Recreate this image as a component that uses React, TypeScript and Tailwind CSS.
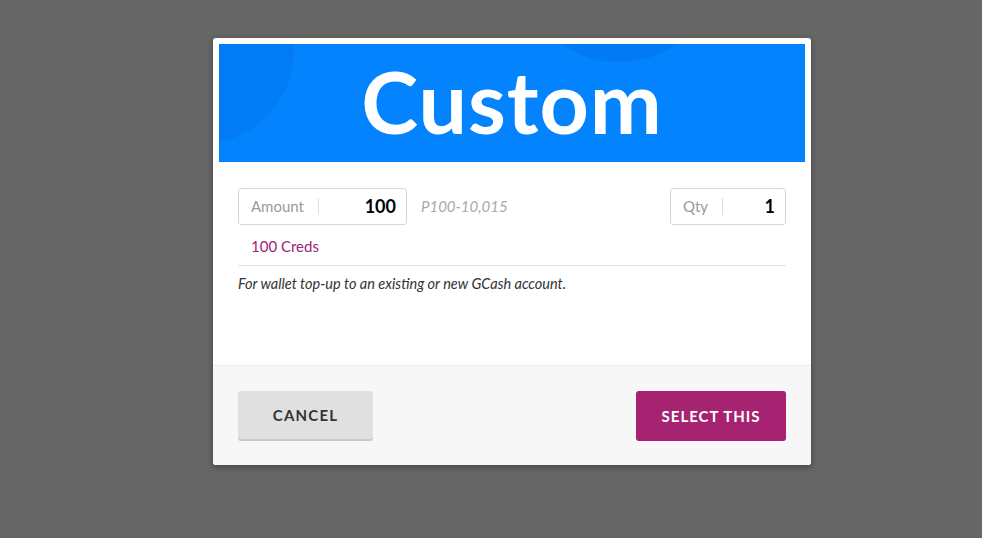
import React from "react";

const font = { fontFamily: "Lato, 'Open Sans', sans-serif" };

const Field = ({ label, value, width, labelWidth }: { label: string; value: string; width: string; labelWidth: string }) => (
  <div className={`flex items-center h-[37px] ${width} border border-[#d6d6d6] rounded-[3px] bg-white`}>
    <div className={`flex items-center h-full ${labelWidth} pl-3 text-[15px] text-[#9a9a9a]`}>
      {label}
      <span className="ml-auto w-px h-[17px] bg-[#dedede]" />
    </div>
    <div className="flex-1 text-right pr-[10px] text-[18px] font-bold text-black">{value}</div>
  </div>
);

export default function App() {
  return (
    <div className="w-[982px] h-[538px] bg-[#666666] pt-[38px] pl-[213px]" style={font}>
      <div className="w-[598px] h-[427px] bg-white rounded-[3px] shadow-[0_2px_6px_rgba(0,0,0,0.35)] flex flex-col overflow-hidden">
        <div className="px-[6px] pt-[6px]">
          <div className="relative h-[118px] bg-[#0483fe] overflow-hidden flex items-center justify-center">
            <div className="absolute -left-[113px] -top-[100px] w-[188px] h-[200px] rounded-full bg-[#027bf6]" />
            <div className="absolute left-[300px] -top-[182px] w-[200px] h-[200px] rounded-full bg-[#027af4]" />
            <span className="relative text-white font-bold text-[86px] leading-none tracking-[1px] -mt-[4px]">
              Custom
            </span>
          </div>
        </div>
        <div className="flex-1 px-[25px] pt-[26px]">
          <div className="flex items-center">
            <Field label="Amount" value="100" width="w-[169px]" labelWidth="w-[80px]" />
            <span className="ml-[14px] italic text-[15px] text-[#a9a9a9]">P100-10,015</span>
            <div className="ml-auto">
              <Field label="Qty" value="1" width="w-[116px]" labelWidth="w-[52px]" />
            </div>
          </div>
          <div className="pl-[13px] pt-[10px] pb-[7px] text-[15px] text-[#9b2470]">100 Creds</div>
          <div className="h-px bg-[#e0e0e0]" />
          <div className="pt-[7px] italic text-[14.5px] text-[#333333]">For wallet top-up to an existing or new GCash account.</div>
        </div>
        <div className="h-[100px] bg-[#f7f7f7] border-t border-[#ececec] flex items-start justify-between px-[25px] pt-[25px]">
          <button className="w-[135px] h-[48px] rounded-[3px] bg-[#e0e0e0] shadow-[0_2px_0_#c8c8c8] text-[15px] font-bold tracking-[1.2px] text-[#333333]">
            CANCEL
          </button>
          <button className="w-[150px] h-[50px] rounded-[3px] bg-[#a62371] text-[15px] font-bold tracking-[1px] text-white">
            SELECT THIS
          </button>
        </div>
      </div>
    </div>
  );
}
